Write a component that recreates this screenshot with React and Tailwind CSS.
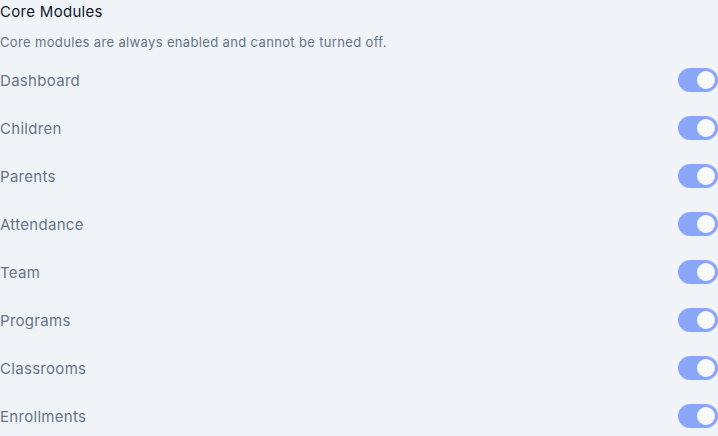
import React from "react";

const modules = [
  "Dashboard",
  "Children",
  "Parents",
  "Attendance",
  "Team",
  "Programs",
  "Classrooms",
  "Enrollments",
];

function Toggle() {
  return (
    <div className="flex h-6 w-10 items-center justify-end rounded-full bg-[#8aa7fb] px-[3px]">
      <div className="h-[18px] w-[18px] rounded-full bg-[#f8fafc]" />
    </div>
  );
}

export default function App() {
  return (
    <div className="min-h-[436px] w-[718px] bg-[#f0f4f9] font-['Inter',sans-serif]">
      <h2 className="h-6 text-[15px] leading-6 tracking-[0.3px] text-[#0f172a]">Core Modules</h2>
      <p className="mt-2 text-[13px] leading-5 tracking-[0.35px] text-[#64748b]">
        Core modules are always enabled and cannot be turned off.
      </p>
      <div className="mt-1 flex flex-col">
        {modules.map((name) => (
          <div key={name} className="flex h-12 items-center justify-between">
            <span className="pt-[2px] text-[15px] tracking-[0.3px] text-[#64748b]">{name}</span>
            <Toggle />
          </div>
        ))}
      </div>
    </div>
  );
}
